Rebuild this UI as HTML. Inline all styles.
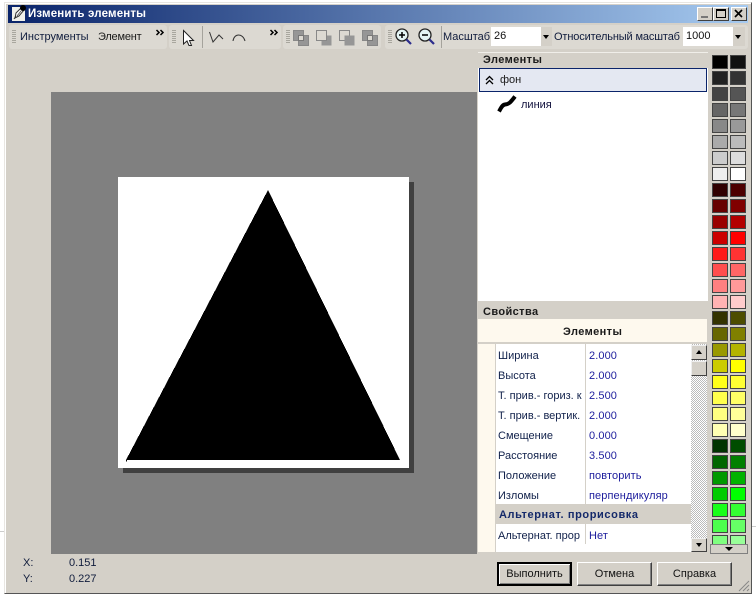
<!DOCTYPE html>
<html><head><meta charset="utf-8"><style>
html,body{margin:0;padding:0;background:#fff;width:756px;height:596px;overflow:hidden}
div,span,svg{position:absolute;box-sizing:border-box}
.t{white-space:nowrap;font:11px/14px "Liberation Sans",sans-serif;color:#101c3c}
.b{font-weight:bold;color:#1a1a1a;letter-spacing:.4px}
.tb{top:25px;height:24px;background:#dcd9d2;border-radius:3px}
.g{top:30px;width:4px;height:14px;background:repeating-linear-gradient(#a8a69e 0 1px,#dcd9d2 1px 2px)}
.sep{top:26px;width:1px;height:22px;background:#a5a39c}
.l{left:498px;width:86px;overflow:hidden;color:#10204a}
.v{left:589px;color:#1c1c9c;letter-spacing:.1px}
.btn{top:562px;width:75px;height:24px;background:#d4d0c8;border:1px solid;border-color:#fff #404040 #404040 #fff;box-shadow:inset -1px -1px 0 #808080;text-align:center;font:11px/22px "Liberation Sans",sans-serif;color:#111}
.pal{left:712px;top:55px;width:34px;height:489px;overflow:hidden;display:grid;grid-template-columns:16px 16px;grid-auto-rows:14px;gap:2px}
.pal i{display:block;border:1px solid #444;outline:0}
.sb{left:691px;width:16px;background:#d4d0c8;border:1px solid;border-color:#eee #404040 #404040 #eee}
</style></head><body>
<div style="left:0;top:531px;width:5px;height:1px;background:#ccc"></div>
<div style="left:751px;top:526px;width:5px;height:1px;background:#ccc"></div>
<div style="left:4px;top:2px;width:748px;height:592px;background:#d4d0c8;border:1px solid;border-color:#e8e6e2 #555 #555 #e8e6e2;box-shadow:inset 1px 1px 0 #fff"></div>

<div style="left:8px;top:5px;width:740px;height:18px;background:linear-gradient(90deg,#0a246a,#a6caf0)"></div>
<svg style="left:12px;top:5px" width="15" height="16" viewBox="0 0 15 16"><rect x="0" y="2" width="13" height="14" fill="#f0f0ea"/><path d="M3 13L4 8L9 3L12 5L7 11Z" fill="#fff" stroke="#333" stroke-width="1"/><path d="M5 11L9 6" stroke="#555"/><circle cx="11" cy="3" r="3" fill="#000"/><path d="M2 14L4 11" stroke="#333"/></svg>
<span class="t" style="left:28px;top:7px;color:#fff;font-weight:bold;font-size:11.5px;letter-spacing:.17px">Изменить элементы</span>
<div style="left:697px;top:7px;width:16px;height:14px;background:#d4d0c8;border:1px solid;border-color:#fff #404040 #404040 #fff"></div>
<div style="left:701px;top:16px;width:7px;height:2px;background:#777"></div>
<div style="left:713px;top:7px;width:16px;height:14px;background:#d4d0c8;border:1px solid;border-color:#fff #404040 #404040 #fff"></div>
<div style="left:716px;top:9px;width:10px;height:9px;border:1px solid #000;border-top-width:2px"></div>
<div style="left:731px;top:7px;width:16px;height:14px;background:#d4d0c8;border:1px solid;border-color:#fff #404040 #404040 #fff"></div>
<svg style="left:734px;top:9px" width="10" height="10"><path d="M1 1L8 8M8 1L1 8" stroke="#000" stroke-width="1.6"/></svg>

<div class="tb" style="left:9px;width:158px"></div>
<div class="tb" style="left:169px;width:112px"></div>
<div class="tb" style="left:283px;width:98px"></div>
<div class="tb" style="left:385px;width:363px"></div>
<div class="g" style="left:12px"></div><div class="g" style="left:172px"></div><div class="g" style="left:286px"></div><div class="g" style="left:388px"></div>
<span class="t" style="left:20px;top:30px">Инструменты</span>
<span class="t" style="left:98px;top:30px;color:#1a1a1a;letter-spacing:-.2px">Элемент</span>
<svg style="left:155px;top:29px" width="10" height="8" fill="none" stroke="#000" stroke-width="1.500"><path d="M1.500 1L4 3.500L1.500 6M5.500 1L8 3.500L5.500 6"/></svg>
<svg style="left:269px;top:29px" width="10" height="8" fill="none" stroke="#000" stroke-width="1.500"><path d="M1.500 1L4 3.500L1.500 6M5.500 1L8 3.500L5.500 6"/></svg>
<div class="sep" style="left:202px"></div>
<div class="sep" style="left:441px"></div>
<svg style="left:180px;top:27px" width="20" height="20"><path d="M3.500 3.500V17L7 14L9 18.500H11.500L9.500 13.500H13.500Z" fill="#fff" stroke="#222" stroke-width="1"/></svg>
<svg style="left:205px;top:28px" width="45" height="18" fill="none" stroke="#333"><path d="M4.500 4L8 14L14 7L18 11"/><path d="M28 13C29 5 38 5 40 13"/></svg>

<svg style="left:290px;top:28px" width="100" height="18">
<g fill="#969696" stroke="#888"><rect x="3.500" y="2.500" width="10" height="10"/><rect x="8.500" y="7.500" width="10" height="10"/></g><rect x="8.500" y="7.500" width="5" height="5" fill="#dcd9d2" stroke="#777"/>
<rect x="31.500" y="7.500" width="10" height="10" fill="#969696"/><rect x="26.500" y="2.500" width="10" height="10" fill="#dcd9d2" stroke="#888"/>
<rect x="49.500" y="2.500" width="10" height="10" fill="#dcd9d2" stroke="#888"/><rect x="54.500" y="7.500" width="10" height="10" fill="#969696"/>
<g fill="#969696" stroke="#888"><rect x="72.500" y="2.500" width="10" height="10"/><rect x="77.500" y="7.500" width="10" height="10"/></g><rect x="77.500" y="7.500" width="5" height="5" fill="#dcd9d2" stroke="#777"/>
</svg>
<svg style="left:393px;top:27px" width="44" height="20" fill="none">
<circle cx="9" cy="8" r="6" fill="#e4f4f4" stroke="#222" stroke-width="1.300"/><path d="M6 8H12M9 5V11" stroke="#000" stroke-width="1.500"/><path d="M13.500 12.500L18 17" stroke="#2c2c8c" stroke-width="2.200"/>
<circle cx="32" cy="8" r="6" fill="#e4f4f4" stroke="#222" stroke-width="1.300"/><path d="M29 8H35" stroke="#000" stroke-width="1.500"/><path d="M36.500 12.500L41 17" stroke="#2c2c8c" stroke-width="2.200"/></svg>

<span class="t" style="left:443px;top:30px">Масштаб</span>
<div style="left:491px;top:27px;width:61px;height:19px;background:#fff"></div>
<div style="left:541px;top:27px;width:11px;height:19px;background:#d4d0c8"></div>
<div style="left:543px;top:35px;border:3px solid transparent;border-top:4px solid #000;border-bottom:0"></div>
<span class="t" style="left:494px;top:29px;color:#111">26</span>
<span class="t" style="left:554px;top:30px;letter-spacing:-.14px">Относительный масштаб</span>
<div style="left:683px;top:27px;width:62px;height:19px;background:#fff"></div>
<div style="left:733px;top:27px;width:12px;height:19px;background:#d4d0c8"></div>
<div style="left:735px;top:35px;border:3px solid transparent;border-top:4px solid #000;border-bottom:0"></div>
<span class="t" style="left:686px;top:29px;color:#111">1000</span>

<div style="left:51px;top:92px;width:426px;height:462px;background:#808080"></div>
<div style="left:123px;top:182px;width:291px;height:291px;background:#404040"></div>
<div style="left:118px;top:177px;width:291px;height:291px;background:#fff"></div>
<svg style="left:118px;top:177px" width="291" height="291" shape-rendering="crispEdges"><path d="M150 13L282 283H9L8.500 286L8 283Z" fill="#000"/></svg>

<div style="left:478px;top:52px;width:230px;height:249px;background:#fff;border-top:1px solid #f0eee9"></div>
<div style="left:478px;top:53px;width:230px;height:15px;background:#d4d0c8"></div>
<span class="t b" style="left:483px;top:53px">Элементы</span>
<div style="left:479px;top:68px;width:228px;height:24px;background:#e4e8f2;border:1px solid #0a246a"></div>
<svg style="left:484px;top:75px" width="12" height="11" fill="none" stroke="#000" stroke-width="1.300"><path d="M2 5L5.500 1.500L9 5M2 9L5.500 5.500L9 9"/></svg>
<span class="t" style="left:500px;top:73px;color:#1a1a1a">фон</span>
<svg style="left:496px;top:94px" width="24" height="22" fill="none" stroke="#000" stroke-width="4"><path d="M3 17.500C5 14 6 11 9 10.500C13 10 14 9 19 2.500"/></svg>
<span class="t" style="left:521px;top:98px;color:#10103c">линия</span>

<div style="left:478px;top:304px;width:230px;height:15px;background:#d4d0c8"></div>
<span class="t b" style="left:483px;top:305px">Свойства</span>
<div style="left:478px;top:319px;width:229px;height:23px;background:#fef9ee"></div>
<span class="t b" style="left:563px;top:325px">Элементы</span>
<div style="left:478px;top:342px;width:229px;height:2px;background:#d4d0c8"></div>
<div style="left:478px;top:344px;width:213px;height:208px;background:#fff"></div>
<div style="left:478px;top:344px;width:17px;height:208px;background:#fef9ee"></div>
<div style="left:495px;top:344px;width:1px;height:208px;background:#d4d0c8"></div>
<div style="left:585px;top:344px;width:1px;height:160px;background:#d4d0c8"></div>
<div style="left:585px;top:524px;width:1px;height:20px;background:#d4d0c8"></div>
<div style="left:496px;top:504px;width:195px;height:20px;background:#d4d0c8"></div>

<span class="t l" style="top:349px">Ширина</span><span class="t v" style="top:349px">2.000</span>
<span class="t l" style="top:369px">Высота</span><span class="t v" style="top:369px">2.000</span>
<span class="t l" style="top:389px">Т. прив.- гориз. к</span><span class="t v" style="top:389px">2.500</span>
<span class="t l" style="top:409px">Т. прив.- вертик.</span><span class="t v" style="top:409px">2.000</span>
<span class="t l" style="top:429px">Смещение</span><span class="t v" style="top:429px">0.000</span>
<span class="t l" style="top:449px">Расстояние</span><span class="t v" style="top:449px">3.500</span>
<span class="t l" style="top:469px">Положение</span><span class="t v" style="top:469px">повторить</span>
<span class="t l" style="top:489px">Изломы</span><span class="t v" style="top:489px">перпендикуляр</span>
<span class="t" style="left:499px;top:508px;font-weight:bold;color:#14296a;letter-spacing:.6px">Альтернат. прорисовка</span>
<span class="t l" style="top:529px">Альтернат. прор</span><span class="t v" style="top:529px">Нет</span>

<div style="left:691px;top:344px;width:16px;height:208px;background-color:#fff;background-image:conic-gradient(#bbb 25%,#fff 0 50%,#bbb 0 75%,#fff 0);background-size:2px 2px"></div>
<div class="sb" style="top:345px;height:15px"></div>
<div style="left:696px;top:350px;border:3px solid transparent;border-bottom:4px solid #000;border-top:0"></div>
<div class="sb" style="top:361px;height:15px"></div>
<div class="sb" style="top:538px;height:14px"></div>
<div style="left:696px;top:543px;border:3px solid transparent;border-top:4px solid #000;border-bottom:0"></div>

<div class="pal">
<i style="background:#000"></i><i style="background:#111"></i><i style="background:#222"></i><i style="background:#333"></i><i style="background:#444"></i><i style="background:#555"></i><i style="background:#666"></i><i style="background:#777"></i><i style="background:#888"></i><i style="background:#999"></i><i style="background:#aaa"></i><i style="background:#bbb"></i><i style="background:#ccc"></i><i style="background:#ddd"></i><i style="background:#eee"></i><i style="background:#fff"></i>
<i style="background:#300000"></i><i style="background:#4d0000"></i><i style="background:#660000"></i><i style="background:#800000"></i><i style="background:#990000"></i><i style="background:#b30000"></i><i style="background:#cc0000"></i><i style="background:#ff0000"></i><i style="background:#ff1a1a"></i><i style="background:#ff3333"></i><i style="background:#ff4d4d"></i><i style="background:#ff6666"></i><i style="background:#ff8080"></i><i style="background:#ff9999"></i><i style="background:#ffb3b3"></i><i style="background:#ffcccc"></i>
<i style="background:#333300"></i><i style="background:#4d4d00"></i><i style="background:#666600"></i><i style="background:#808000"></i><i style="background:#999900"></i><i style="background:#b3b300"></i><i style="background:#cccc00"></i><i style="background:#ffff00"></i><i style="background:#ffff1a"></i><i style="background:#ffff33"></i><i style="background:#ffff4d"></i><i style="background:#ffff66"></i><i style="background:#ffff80"></i><i style="background:#ffff99"></i><i style="background:#ffffb3"></i><i style="background:#ffffcc"></i>
<i style="background:#003300"></i><i style="background:#004d00"></i><i style="background:#006600"></i><i style="background:#008000"></i><i style="background:#009900"></i><i style="background:#00b300"></i><i style="background:#00cc00"></i><i style="background:#00ff00"></i><i style="background:#1aff1a"></i><i style="background:#33ff33"></i><i style="background:#4dff4d"></i><i style="background:#66ff66"></i><i style="background:#80ff80"></i><i style="background:#99ff99"></i>
</div>
<div style="left:710px;top:544px;width:38px;height:10px;background:#d4d0c8;border:1px solid #808080"></div>
<div style="left:725px;top:547px;border:4px solid transparent;border-top:4px solid #000;border-bottom:0"></div>

<span class="t" style="left:23px;top:556px">X:</span><span class="t" style="left:69px;top:556px">0.151</span>
<span class="t" style="left:23px;top:572px">Y:</span><span class="t" style="left:69px;top:572px">0.227</span>

<div class="btn" style="left:497px;border:2px solid #000;line-height:20px;box-shadow:inset 1px 1px 0 #fff,inset -1px -1px 0 #808080">Выполнить</div>
<div class="btn" style="left:577px">Отмена</div>
<div class="btn" style="left:657px">Справка</div>
<svg style="left:738px;top:580px" width="12" height="12" stroke="#888"><path d="M11 1L1 11M11 5L5 11M11 9L9 11"/></svg>
</body></html>
